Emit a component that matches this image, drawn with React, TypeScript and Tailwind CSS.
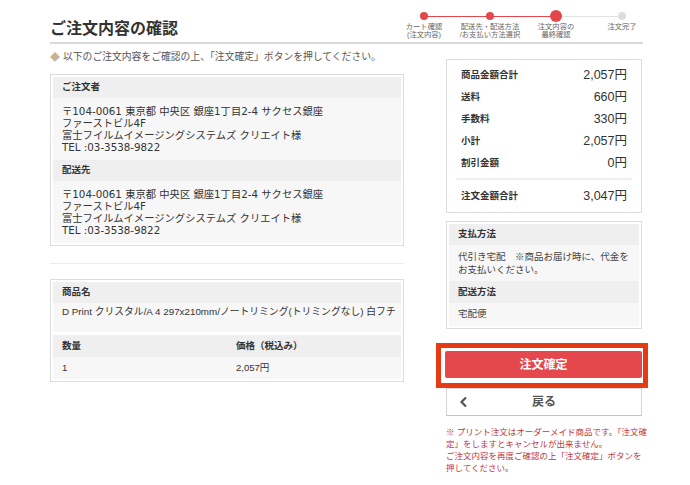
import React from 'react'

const font = "font-['Liberation_Sans','Noto_Sans_CJK_JP',sans-serif]"
const wideFont = "font-['DejaVu_Sans','Noto_Sans_CJK_JP',sans-serif]"

const steps = [
  { label: ['カート確認', '(注文内容)'], state: 'done' },
  { label: ['配送先・配送方法', '/お支払い方法選択'], state: 'done' },
  { label: ['注文内容の', '最終確認'], state: 'current' },
  { label: ['注文完了'], state: 'todo' },
]

const Stepper = () => (
  <div className="relative flex -mr-[12px] pt-[10px]">
    {/* connecting lines */}
    <div className="absolute top-[16px] left-[33px] w-[133px] h-px bg-[#e4474b]" />
    <div className="absolute top-[16px] left-[166px] w-[66px] h-px bg-[#e2e2e2]" />
    {steps.map((s, i) => (
      <div key={i} className="relative w-[66px] flex flex-col items-center">
        <div className="h-[12px] flex items-center justify-center">
          {s.state === 'current' && <span className="block w-[12px] h-[12px] rounded-full bg-[#e4474b]" />}
          {s.state === 'done' && <span className="block w-[8px] h-[8px] rounded-full bg-[#e4474b]" />}
          {s.state === 'todo' && <span className="block w-[8px] h-[8px] rounded-full bg-[#dedede]" />}
        </div>
        <div className="mt-[1px] text-[7.3px] leading-[7.5px] text-[#666] text-center whitespace-nowrap">
          {s.label.map((l) => (
            <div key={l}>{l}</div>
          ))}
        </div>
      </div>
    ))}
  </div>
)

const Address = () => (
  <div className={`${wideFont} bg-[#f7f7f7] px-[9px] py-[7px] text-[10.3px] leading-[12px] text-[#333] h-[62px] whitespace-nowrap`}>
    <p>〒104-0061 東京都 中央区 銀座1丁目2-4 サクセス銀座</p>
    <p>ファーストビル4F</p>
    <p>富士フイルムイメージングシステムズ クリエイト様</p>
    <p>TEL :03-3538-9822</p>
  </div>
)

const Head = ({ children, h = 'h-[21px]' }: { children: React.ReactNode; h?: string }) => (
  <div className={`${h} bg-[#efefef] px-[9px] flex items-center text-[9.5px] font-bold text-[#333]`}>{children}</div>
)

const SumRow = ({ label, value }: { label: string; value: string }) => (
  <div className="flex items-center justify-between h-[22px]">
    <span className="text-[9.5px] font-bold text-[#333]">{label}</span>
    <span className="text-[12.5px] text-[#333]">{value}</span>
  </div>
)

export default function App() {
  return (
    <div className={`${font} w-[690px] h-[485px] bg-white text-[#333] overflow-hidden`}>
      {/* header */}
      <div className="ml-[50px] w-[593px] h-[44px] border-b-2 border-[#dadada] flex items-start justify-between">
        <h1 className="pt-[19px] text-[16px] leading-[20px] font-bold text-[#333]">ご注文内容の確認</h1>
        <Stepper />
      </div>

      <div className="flex ml-[50px] gap-[42px]">
        {/* left column */}
        <div className="w-[354px]">
          <p className="mt-[6px] h-[14px] flex items-center text-[9.8px] text-[#555] whitespace-nowrap">
            <span className="text-[#c8b397] text-[10px] mr-[3px]">◆</span>
            以下のご注文内容をご確認の上、「注文確定」ボタンを押してください。
          </p>

          <div className="mt-[10px] border border-[#dcdcdc] p-[2px]">
            <Head>ご注文者</Head>
            <Address />
            <Head>配送先</Head>
            <Address />
          </div>

          <hr className="mt-[17px] border-t border-[#ececec]" />

          <div className="mt-[15px] border border-[#dcdcdc] p-[2px]">
            <Head>商品名</Head>
            <div className="bg-[#f7f7f7] h-[29px] px-[9px] pt-[3px] text-[9.8px] leading-[12px] text-[#333] whitespace-nowrap">
              D Print クリスタル/A 4 297x210mm/ノートリミング(トリミングなし) 白フチ
            </div>
            <div className="h-[3px]" />
            <div className="grid grid-cols-2 bg-[#efefef] h-[22px] items-center text-[9.5px] font-bold">
              <span className="px-[9px]">数量</span>
              <span className="px-[9px]">価格（税込み）</span>
            </div>
            <div className="grid grid-cols-2 bg-[#f7f7f7] h-[22px] items-center text-[9.5px]">
              <span className="px-[9px]">1</span>
              <span className="px-[9px]">2,057円</span>
            </div>
          </div>
        </div>

        {/* right column */}
        <div className="w-[196px]">
          <div className="mt-[15px] border border-[#dcdcdc] bg-white pt-[4px] pb-[5px]">
            <div className="px-[14px]">
              <SumRow label="商品金額合計" value="2,057円" />
              <SumRow label="送料" value="660円" />
              <SumRow label="手数料" value="330円" />
              <SumRow label="小計" value="2,057円" />
              <SumRow label="割引金額" value="0円" />
            </div>
            <div className="mx-[9px] mt-[4px] mb-[5px] h-[2px] bg-[#eeeeee]" />
            <div className="px-[14px]">
              <SumRow label="注文金額合計" value="3,047円" />
            </div>
          </div>

          <div className="mt-[8px] border border-[#dcdcdc] p-[2px]">
            <Head>支払方法</Head>
            <div className="bg-[#f7f7f7] px-[9px] py-[5px] text-[9.5px] leading-[13px] text-[#444]">
              代引き宅配　※商品お届け時に、代金を
              <br />
              お支払いください。
            </div>
            <Head h="h-[22px]">配送方法</Head>
            <div className="bg-[#f7f7f7] px-[9px] h-[23px] flex items-center text-[9.5px] text-[#444]">宅配便</div>
          </div>

          {/* highlighted confirm button */}
          <div className="mt-[14px] -ml-[10px] -mr-[6px] border-[5px] border-[#e63a12] pl-[4px] pt-[3px] pb-[5px]">
            <button className="w-[197px] h-[27px] bg-[#e5484c] rounded-[2px] text-white text-[12px] font-bold">
              注文確定
            </button>
          </div>

          <button className="relative w-[196px] h-[28px] bg-white border border-[#d5d5d5] border-b-[#c4c4c4] flex items-center justify-center text-[12px] font-bold text-[#555]">
            <svg className="absolute left-[12px]" width="9" height="12" viewBox="0 0 9 12">
              <path d="M7 1.5 L2.5 6 L7 10.5" fill="none" stroke="#555" strokeWidth="2.2" />
            </svg>
            戻る
          </button>

          <div className="mt-[10px] text-[8.5px] leading-[12px] text-[#bf3640] whitespace-nowrap">
            <p>※ プリント注文はオーダーメイド商品です。「注文確</p>
            <p>定」をしますとキャンセルが出来ません。</p>
            <p>ご注文内容を再度ご確認の上「注文確定」ボタンを</p>
            <p>押してください。</p>
          </div>
        </div>
      </div>
    </div>
  )
}
